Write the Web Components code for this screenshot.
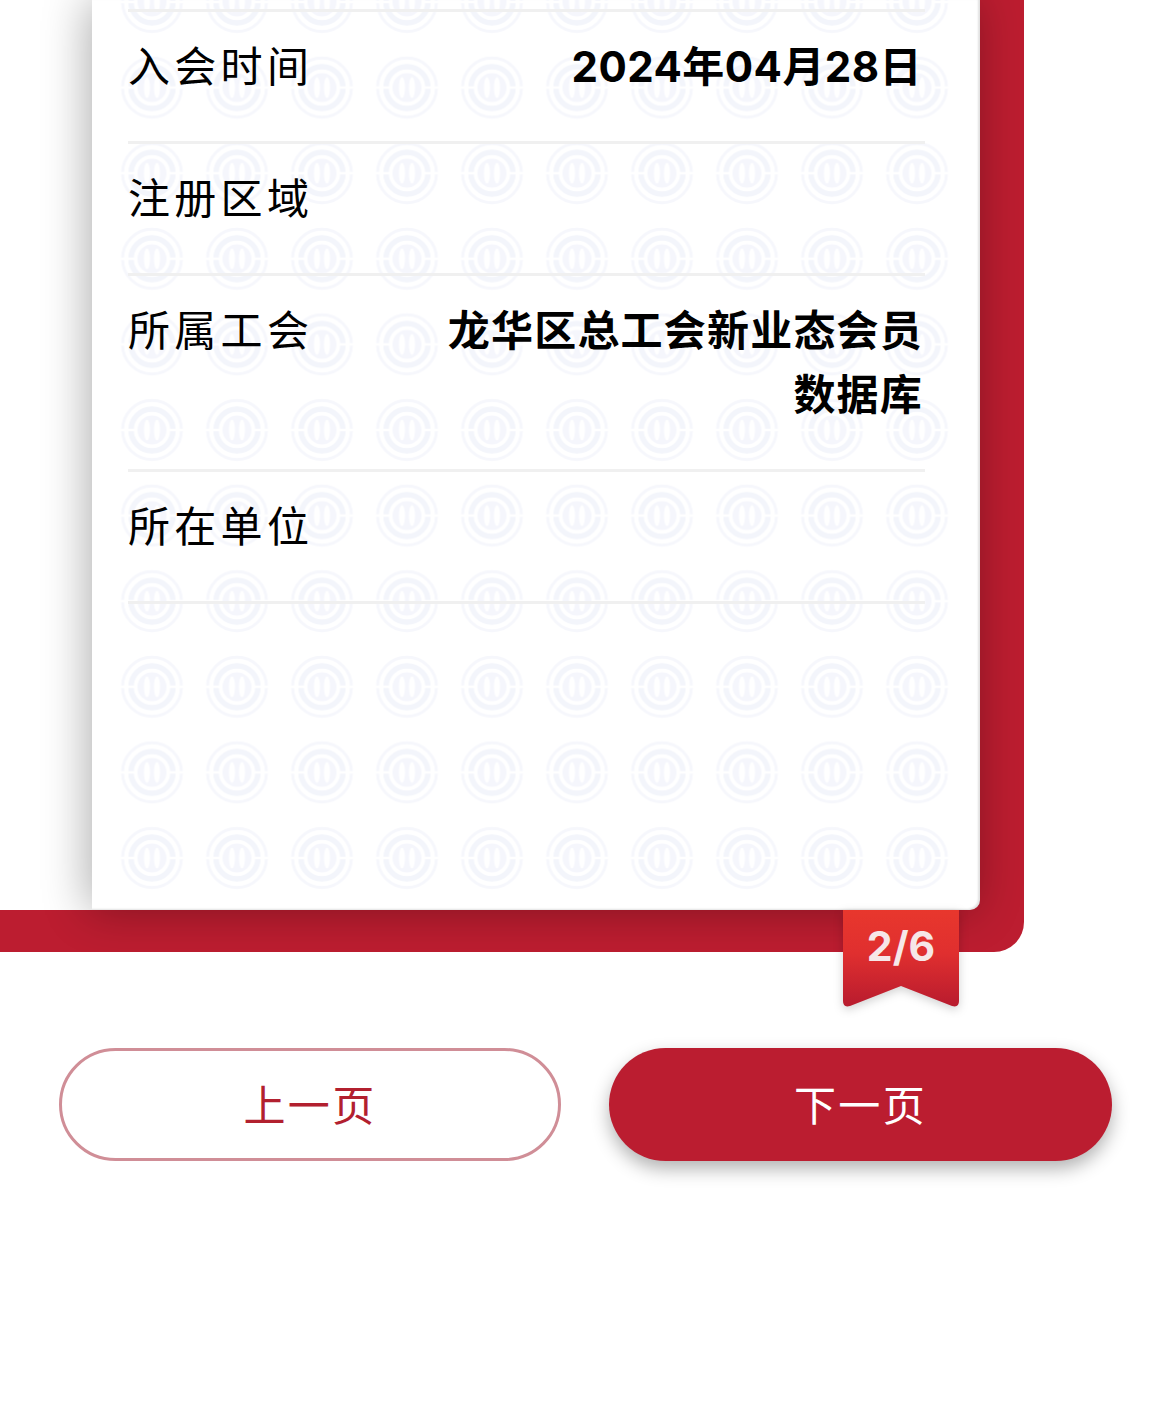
<!DOCTYPE html>
<html lang="zh">
<head>
<meta charset="utf-8">
<title>会员信息</title>
<style>
  html, body { margin: 0; background: #fff; }
  body { font-family: Inter, "Noto Sans CJK SC", sans-serif; height: 1421px; overflow: hidden; }
</style>
</head>
<body>
<member-page>
  <member-card page="2/6">
    <info-row label="入会时间" value="2024年04月28日" tight></info-row>
    <info-row label="注册区域"></info-row>
    <info-row label="所属工会" value="龙华区总工会新业态会员数据库"></info-row>
    <info-row label="所在单位"></info-row>
  </member-card>
  <pager-bar>
    <pager-button>上一页</pager-button>
    <pager-button primary>下一页</pager-button>
  </pager-bar>
</member-page>

<script>
class MemberPage extends HTMLElement {
  constructor() {
    super();
    this.attachShadow({ mode: 'open' });
  }

  connectedCallback() {
    this.shadowRoot.innerHTML = `
      <style>
        :host { display: block; width: 1170px; }
      </style>
      <slot></slot>
    `;
  }
}

class MemberCard extends HTMLElement {
  constructor() {
    super();
    this.attachShadow({ mode: 'open' });
  }

  connectedCallback() {
    this.shadowRoot.innerHTML = `
      <style>
        :host { display: block; position: relative; width: 1024px; }
        .frame {
          padding: 0 44px 42px 92px;
          border-bottom-right-radius: 30px;
          overflow: hidden;
          background:
            linear-gradient(#fff, #fff) 0 0 / 92px calc(100% - 42px) no-repeat,
            #bc1d30;
        }
        .sheet {
          position: relative;
          height: 910px;
          box-sizing: border-box;
          background: #fff;
          border-bottom-right-radius: 10px;
          box-shadow: -4px 0 46px rgba(0, 0, 0, .32), inset -2px -1px 2px rgba(0, 0, 0, .12);
        }
        .mark { position: absolute; left: 0; top: 0; width: 100%; height: 100%; }
        .rows { position: relative; margin: 0 55px 0 36px; }
        .rule { height: 9px; border-bottom: 3px solid #f0f0f0; }
        .ribbon { position: absolute; left: 843px; top: 910px; width: 116px; height: 98px; }
        .ribbon svg { position: absolute; left: 0; top: 0; overflow: visible; filter: drop-shadow(0 3px 5px rgba(0, 0, 0, .18)); }
        .ribbon span {
          position: relative;
          display: block;
          text-align: center;
          font: 700 41px/73px Inter, sans-serif;
          color: #f6e7e8;
        }
      </style>
      <div class="frame">
        <div class="sheet">
          <svg class="mark" aria-hidden="true">
            <defs>
              <filter id="soft"><feGaussianBlur stdDeviation=".6"/></filter>
              <pattern id="logo" patternUnits="userSpaceOnUse" x="17.5" y="-40.8" width="85" height="85.6">
                <g fill="none" transform="translate(42.5 42.8)" filter="url(#soft)">
                  <circle r="29.5" stroke="#f6f7fc" stroke-width="3"/>
                  <circle r="21" stroke="#f3f5fb" stroke-width="5.5"/>
                  <circle r="14.5" fill="#f5f6fc"/>
                  <ellipse cx="-5" rx="3" ry="10.5" fill="#fff"/>
                  <ellipse cx="5" rx="3" ry="10.5" fill="#fff"/>
                  <path d="M-33 0H-16M16 0H33" stroke="#fff" stroke-width="2.5"/>
                </g>
              </pattern>
            </defs>
            <rect x="28" y="0" width="829" height="890" fill="url(#logo)"/>
          </svg>
          <div class="rows">
            <div class="rule"></div>
            <slot></slot>
          </div>
        </div>
      </div>
      <div class="ribbon">
        <svg width="116" height="98" viewBox="0 0 116 98" aria-hidden="true">
          <defs>
            <linearGradient id="rib" x1="0" y1="0" x2="0" y2="1">
              <stop offset="0" stop-color="#e8372d"/>
              <stop offset=".45" stop-color="#e02f2f"/>
              <stop offset="1" stop-color="#b81b2e"/>
            </linearGradient>
          </defs>
          <path d="M0 0H116V91Q116 98 109 96L58 76L7 96Q0 98 0 91Z" fill="url(#rib)"/>
        </svg>
        <span>${this.getAttribute('page')}</span>
      </div>
    `;
  }
}

class InfoRow extends HTMLElement {
  constructor() {
    super();
    this.attachShadow({ mode: 'open' });
  }

  connectedCallback() {
    const label = this.getAttribute('label') || '';
    const value = this.getAttribute('value') || '';
    this.shadowRoot.innerHTML = `
      <style>
        :host {
          display: flex;
          justify-content: space-between;
          align-items: flex-start;
          padding: 23px 2px 42px 0;
          border-bottom: 3px solid #f0f0f0;
          font-size: 42px;
          line-height: 64px;
          color: #000;
        }
        .label { letter-spacing: 4.3px; white-space: nowrap; }
        .value { width: 480px; text-align: right; font-weight: 700; letter-spacing: 1.2px; }
        :host([tight]) .value { letter-spacing: .45px; margin-right: 1px; }
      </style>
      <div class="label">${label}</div>
      <div class="value">${value}</div>
    `;
  }
}

class PagerBar extends HTMLElement {
  constructor() {
    super();
    this.attachShadow({ mode: 'open' });
  }

  connectedCallback() {
    this.shadowRoot.innerHTML = `
      <style>
        :host { display: grid; grid-template-columns: 502px 503px; gap: 48px; padding: 96px 0 0 59px; }
      </style>
      <slot></slot>
    `;
  }
}

class PagerButton extends HTMLElement {
  constructor() {
    super();
    this.attachShadow({ mode: 'open' });
  }

  connectedCallback() {
    this.shadowRoot.innerHTML = `
      <style>
        :host {
          display: flex;
          align-items: center;
          justify-content: center;
          box-sizing: border-box;
          height: 113px;
          padding-bottom: 4px;
          border-radius: 57px;
          border: 3px solid #d08e97;
          background: #fff;
          color: #b2202f;
          font-size: 42px;
          letter-spacing: 2.4px;
        }
        :host([primary]) {
          border: 0;
          background: #bb1d30;
          color: #fff;
          box-shadow: 0 8px 18px rgba(0, 0, 0, .3);
        }
      </style>
      <slot></slot>
    `;
  }
}

customElements.define('member-page', MemberPage);
customElements.define('member-card', MemberCard);
customElements.define('info-row', InfoRow);
customElements.define('pager-bar', PagerBar);
customElements.define('pager-button', PagerButton);
</script>
</body>
</html>
